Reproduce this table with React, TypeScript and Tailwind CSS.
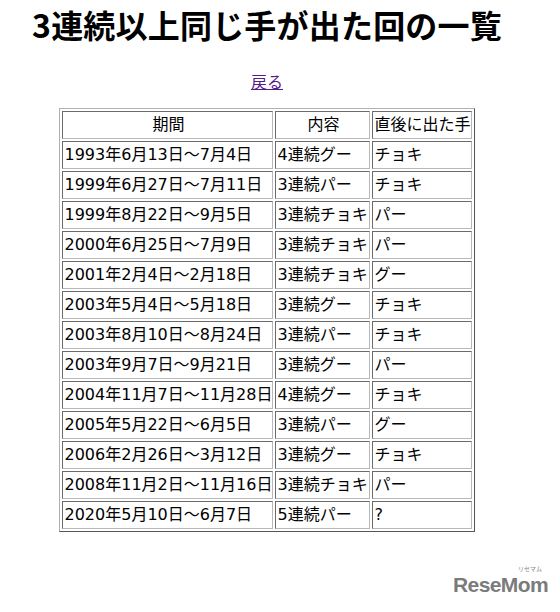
import React from "react";

const rows: [string, string, string][] = [
  ["1993年6月13日～7月4日", "4連続グー", "チョキ"],
  ["1999年6月27日～7月11日", "3連続パー", "チョキ"],
  ["1999年8月22日～9月5日", "3連続チョキ", "パー"],
  ["2000年6月25日～7月9日", "3連続チョキ", "パー"],
  ["2001年2月4日～2月18日", "3連続チョキ", "グー"],
  ["2003年5月4日～5月18日", "3連続グー", "チョキ"],
  ["2003年8月10日～8月24日", "3連続パー", "チョキ"],
  ["2003年9月7日～9月21日", "3連続グー", "パー"],
  ["2004年11月7日～11月28日", "4連続グー", "チョキ"],
  ["2005年5月22日～6月5日", "3連続パー", "グー"],
  ["2006年2月26日～3月12日", "3連続グー", "チョキ"],
  ["2008年11月2日～11月16日", "3連続チョキ", "パー"],
  ["2020年5月10日～6月7日", "5連続パー", "?"],
];

const cell =
  "h-[28px] p-0 pl-[1px] border border-t-[#6b6b6b] border-l-[#6b6b6b] border-r-[#b8b8b8] border-b-[#b8b8b8] leading-[24px] whitespace-nowrap";

export default function App() {
  return (
    <div
      className="relative w-[560px] h-[612px] bg-white text-black overflow-hidden"
      style={{ fontFamily: '"DejaVu Sans", "Noto Sans CJK JP", sans-serif' }}
    >
      <div className="w-[534px] flex flex-col items-center">
        <h1
          className="pt-[4px] text-[32px] leading-[40px] font-bold tracking-[0.2px]"
          style={{ fontFamily: '"Noto Sans CJK JP", sans-serif' }}
        >
          3連続以上同じ手が出た回の一覧
        </h1>
        <div className="mt-[27px] text-[16px] leading-[24px]">
          <a href="#" className="text-[#551a8b] underline">
            戻る
          </a>
        </div>
        <table className="mt-[13px] border-separate border-spacing-[2px] border border-t-[#b0b0b0] border-l-[#b0b0b0] border-r-[#555555] border-b-[#555555] text-[16px]">
          <thead>
            <tr>
              <th className={`${cell} w-[211px] font-normal text-center`}>期間</th>
              <th className={`${cell} w-[95px] font-normal text-center`}>内容</th>
              <th className={`${cell} w-[99px] font-normal text-left`}>直後に出た手</th>
            </tr>
          </thead>
          <tbody>
            {rows.map((r, i) => (
              <tr key={i}>
                <td className={cell}>{r[0]}</td>
                <td className={cell}>{r[1]}</td>
                <td className={cell}>{r[2]}</td>
              </tr>
            ))}
          </tbody>
        </table>
      </div>
      <div className="absolute left-[446px] top-[565px] flex flex-col items-end w-[102px]">
        <span
          className="text-[6px] leading-[7px] text-[#888] mr-[6px]"
          style={{ fontFamily: '"Noto Sans CJK JP", sans-serif' }}
        >
          リセマム
        </span>
        <span
          className="mt-[2px] text-[21px] leading-[22px] font-bold text-[#7b7b7b] tracking-[-0.6px]"
          style={{ fontFamily: '"Liberation Sans", Arial, sans-serif' }}
        >
          ReseMom
        </span>
      </div>
    </div>
  );
}
